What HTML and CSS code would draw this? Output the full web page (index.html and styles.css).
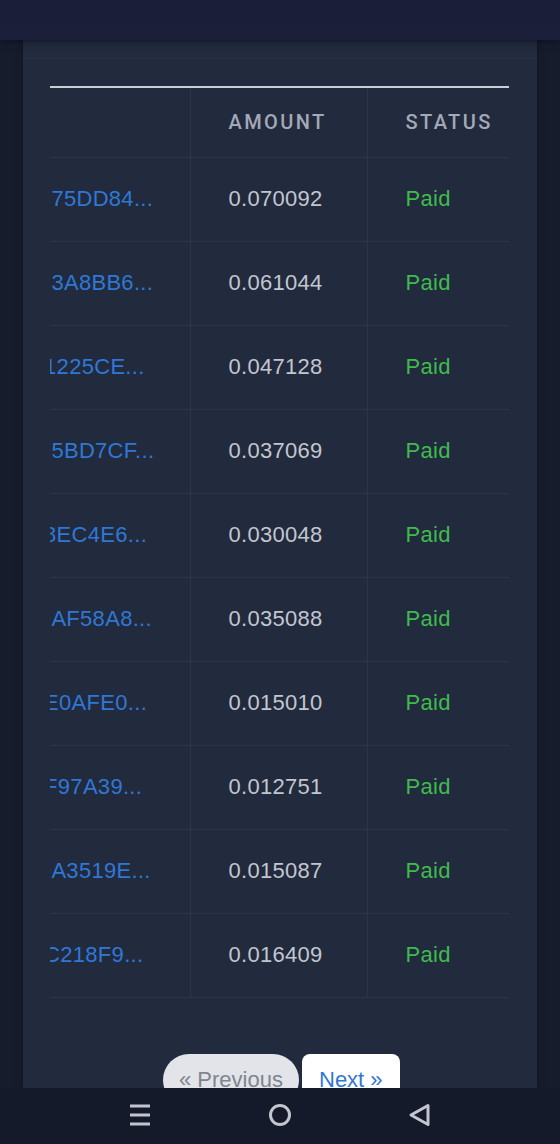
FILE: index.html
```html
<!DOCTYPE html>
<html lang="en">
<head>
<meta charset="utf-8">
<title>Payments</title>
<link rel="stylesheet" href="styles.css">
</head>
<body>
<div class="screen">
  <header class="topbar"></header>
  <main class="card">
    <div class="card-head"></div>
    <div class="table-scroll">
      <table class="tx-table">
        <colgroup>
          <col class="c-hash"><col class="c-amount"><col class="c-status">
        </colgroup>
        <thead>
          <tr><th></th><th>AMOUNT</th><th>STATUS</th></tr>
        </thead>
        <tbody>
          <tr><td><a class="hash" href="#">DC75DD84...</a></td><td class="amount">0.070092</td><td class="status">Paid</td></tr>
          <tr><td><a class="hash" href="#">DC3A8BB6...</a></td><td class="amount">0.061044</td><td class="status">Paid</td></tr>
          <tr><td><a class="hash" href="#">041225CE...</a></td><td class="amount">0.047128</td><td class="status">Paid</td></tr>
          <tr><td><a class="hash" href="#">CD5BD7CF...</a></td><td class="amount">0.037069</td><td class="status">Paid</td></tr>
          <tr><td><a class="hash" href="#">558EC4E6...</a></td><td class="amount">0.030048</td><td class="status">Paid</td></tr>
          <tr><td><a class="hash" href="#">DDAF58A8...</a></td><td class="amount">0.035088</td><td class="status">Paid</td></tr>
          <tr><td><a class="hash" href="#">29E0AFE0...</a></td><td class="amount">0.015010</td><td class="status">Paid</td></tr>
          <tr><td><a class="hash" href="#">63F97A39...</a></td><td class="amount">0.012751</td><td class="status">Paid</td></tr>
          <tr><td><a class="hash" href="#">CDA3519E...</a></td><td class="amount">0.015087</td><td class="status">Paid</td></tr>
          <tr><td><a class="hash" href="#">71C218F9...</a></td><td class="amount">0.016409</td><td class="status">Paid</td></tr>
        </tbody>
      </table>
    </div>
    <nav class="pager">
      <a class="pager-btn prev" href="#">« Previous</a>
      <a class="pager-btn next" href="#">Next »</a>
    </nav>
  </main>
  <footer class="sysnav">
    <svg class="sys-icon" width="24" height="24" viewBox="0 0 24 24" aria-hidden="true">
      <path d="M2 3h20M2 12h20M2 21h20" stroke="#c3c6cf" stroke-width="3" fill="none"/>
    </svg>
    <svg class="sys-icon" width="24" height="24" viewBox="0 0 24 24" aria-hidden="true">
      <circle cx="12" cy="12" r="9.5" stroke="#c3c6cf" stroke-width="3" fill="none"/>
    </svg>
    <svg class="sys-icon" width="24" height="24" viewBox="0 0 24 24" aria-hidden="true">
      <path d="M20 2.5L3 12l17 9.5z" stroke="#c3c6cf" stroke-width="3" stroke-linejoin="round" fill="none"/>
    </svg>
  </footer>
</div>
</body>
</html>
```

FILE: styles.css
```css
* { box-sizing: border-box; }

html, body {
  margin: 0;
  padding: 0;
  background: #171c2c;
}

.screen {
  width: 560px;
  height: 1144px;
  display: flex;
  flex-direction: column;
  overflow: hidden;
  font-family: "Liberation Sans", Arial, sans-serif;
}

.topbar {
  height: 40px;
  flex: none;
  background: linear-gradient(#1b1e38, #1c1f3a);
  box-shadow: 0 2px 6px rgba(10, 12, 25, 0.6);
  position: relative;
  z-index: 2;
}

.card {
  flex: 1;
  margin: 0 23px;
  background: #222a3d;
  overflow: hidden;
  box-shadow: 0 0 6px rgba(10, 12, 24, 0.5);
}

.card-head {
  height: 19px;
  border-bottom: 1px solid #29314a;
}

.table-scroll {
  margin: 27px 27px 0;
  overflow: hidden;
}

.tx-table {
  table-layout: fixed;
  border-collapse: collapse;
  width: 528px;
  margin-left: -69px;
}

.c-hash { width: 209px; }
.c-amount { width: 177px; }
.c-status { width: 142px; }

.tx-table th {
  height: 70px;
  padding: 0 0 0 38px;
  text-align: left;
  font-family: Roboto, "Liberation Sans", sans-serif;
  font-weight: 500;
  font-size: 20px;
  letter-spacing: 2.4px;
  color: #a3a9b7;
  border-top: 2px solid #c9cdd8;
  border-bottom: 1px solid #2d354a;
  white-space: nowrap;
  vertical-align: middle;
}

.tx-table td {
  height: 84px;
  padding: 0 0 0 38px;
  font-size: 22px;
  letter-spacing: 0.3px;
  border-bottom: 1px solid #2d354a;
  white-space: nowrap;
  vertical-align: middle;
}

.tx-table th:not(:last-child),
.tx-table td:not(:last-child) {
  border-right: 1px solid #2d354a;
}

.hash {
  color: #2f78d6;
  text-decoration: none;
}

.amount { color: #c2c6cf; }

.status { color: #3fbb4c; }

.pager {
  display: flex;
  justify-content: center;
  gap: 3px;
  margin-top: 56px;
  padding-left: 3px;
}

.pager-btn {
  display: block;
  height: 52px;
  padding: 13px 16px 0;
  font-size: 22px;
  line-height: 26px;
  text-decoration: none;
}

.prev {
  width: 136px;
  background: #e2e4e9;
  color: #80858f;
  border-radius: 26px;
}

.next {
  width: 98px;
  padding-left: 17px;
  background: #ffffff;
  color: #2f78d6;
  border-radius: 8px;
}

.sysnav {
  height: 56px;
  flex: none;
  background: #151a2a;
  display: flex;
  justify-content: center;
  align-items: center;
  gap: 116px;
  padding-bottom: 2px;
}

.sys-icon { display: block; }
```
